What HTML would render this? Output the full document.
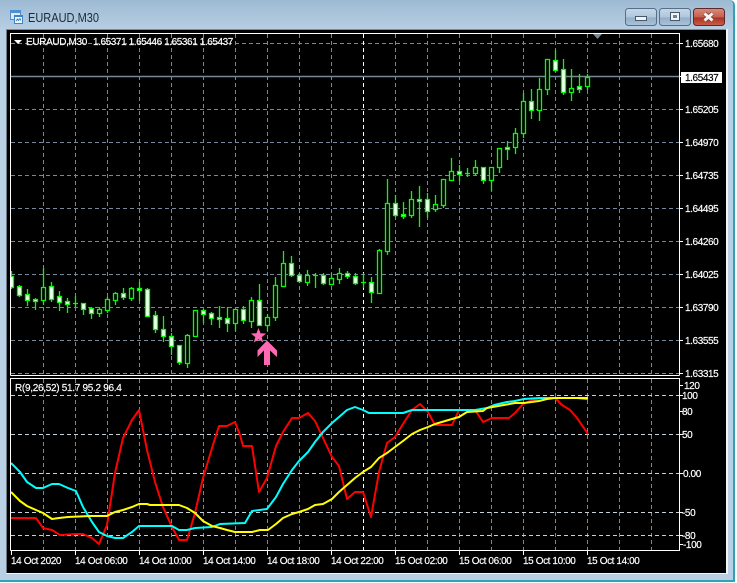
<!DOCTYPE html>
<html><head><meta charset="utf-8"><title>EURAUD,M30</title>
<style>
html,body{margin:0;padding:0;background:#fff;width:737px;height:583px;overflow:hidden}
svg{position:absolute;left:0;top:0;display:block}
text{font-family:"Liberation Sans",sans-serif;font-size:10px;fill:#fff;stroke:#fff;stroke-width:.18px;letter-spacing:-.4px}
</style></head><body>
<svg width="737" height="583" viewBox="0 0 737 583" xmlns="http://www.w3.org/2000/svg">
<defs>
<linearGradient id="tb" gradientUnits="userSpaceOnUse" x1="0" y1="0" x2="0" y2="30"><stop offset="0" stop-color="#9dbad2"/><stop offset="1" stop-color="#b8cfe4"/></linearGradient>
<linearGradient id="bn" x1="0" y1="0" x2="0" y2="1"><stop offset="0" stop-color="#c6d8e8"/><stop offset=".5" stop-color="#afc6db"/><stop offset=".55" stop-color="#94afc8"/><stop offset="1" stop-color="#aac3d9"/></linearGradient>
<linearGradient id="cl" x1="0" y1="0" x2="0" y2="1"><stop offset="0" stop-color="#d88c7c"/><stop offset=".5" stop-color="#c4604e"/><stop offset=".55" stop-color="#ab3222"/><stop offset="1" stop-color="#c95f4a"/></linearGradient>
<clipPath id="mc"><rect x="11" y="34" width="668" height="341"/></clipPath>
<clipPath id="ic"><rect x="11" y="379" width="668" height="171"/></clipPath>
</defs>
<path d="M0 0H729Q735 0 735 6V582H0Z" fill="#2fa3b4"/>
<path d="M0 0H728Q733 0 733 5V580H0Z" fill="#b8cfe4"/>
<path d="M0 0H728Q733 0 733 5V30H0Z" fill="url(#tb)"/>
<rect x="6" y="29" width="2" height="544" fill="#6f7a84"/>
<rect x="6" y="29" width="721" height="1" fill="#7e8b97"/>
<rect x="6" y="573" width="721" height="1" fill="#f2f6fa"/>
<rect x="726" y="29" width="2" height="545" fill="#f2f6fa"/>
<rect x="7" y="30" width="719" height="543" fill="#000"/>

<!-- icon -->
<g shape-rendering="crispEdges">
<rect x="10.5" y="10.5" width="10" height="9" fill="#dbe9f6" stroke="#4f8fd0"/>
<rect x="10" y="10" width="11" height="3" fill="#4f8fd0"/>
<rect x="14.5" y="15.5" width="8" height="8" fill="#eef5fb" stroke="#3f82c8"/>
<rect x="14" y="15" width="9" height="2" fill="#3f82c8"/>
</g>
<path d="M16 21l1.5-2 1 1.5 1.5-2 1 2" fill="none" stroke="#2f6fb5" stroke-width=".8"/>
<text x="28" y="22" textLength="71" lengthAdjust="spacingAndGlyphs" style="font-size:13px;fill:#1b2a3a;stroke:none;letter-spacing:0">EURAUD,M30</text>

<!-- window buttons -->
<rect x="625.5" y="8.5" width="31" height="17" rx="3" fill="url(#bn)" stroke="#566f88"/>
<rect x="635.5" y="16.5" width="11" height="4" fill="#eef3f8" stroke="#46586a" shape-rendering="crispEdges"/>
<rect x="659.5" y="8.5" width="31" height="17" rx="3" fill="url(#bn)" stroke="#566f88"/>
<rect x="670.500" y="12.500" width="9" height="8" fill="#eef3f8" stroke="#46586a" shape-rendering="crispEdges"/>
<rect x="673" y="15" width="4" height="3" fill="#6d8193"/>
<rect x="693.5" y="8.5" width="31" height="17" rx="3" fill="url(#cl)" stroke="#5c2a2a"/>
<path d="M704.500 13.500L712.500 20.500M712.500 13.500L704.500 20.500" fill="none" stroke="#6e3a34" stroke-width="4.400"/>
<path d="M704.500 13.500L712.500 20.500M712.500 13.500L704.500 20.500" fill="none" stroke="#f6f3f0" stroke-width="3"/>

<!-- grid main -->
<g shape-rendering="crispEdges" fill="none" stroke="#778899" stroke-dasharray="4 3">
<path d="M11 43.5H679M11 109.5H679M11 142.5H679M11 175.5H679M11 208.5H679M11 241.5H679M11 274.5H679M11 307.5H679M11 340.5H679M11 373.5H679"/>
<path d="M43.5 34V375M75.5 34V375M107.5 34V375M139.5 34V375M171.5 34V375M203.5 34V375M235.5 34V375M267.5 34V375M299.5 34V375M331.5 34V375M395.5 34V375M427.5 34V375M459.5 34V375M491.5 34V375M523.5 34V375M555.5 34V375M587.5 34V375M619.5 34V375M651.5 34V375"/>
<path stroke="#fff" d="M363.5 34V375"/>
<path d="M43.5 379V550M75.5 379V550M107.5 379V550M139.5 379V550M171.5 379V550M203.5 379V550M235.5 379V550M267.5 379V550M299.5 379V550M331.5 379V550M395.5 379V550M427.5 379V550M459.5 379V550M491.5 379V550M523.5 379V550M555.5 379V550M587.5 379V550M619.5 379V550M651.5 379V550"/>
<path stroke="#fff" d="M363.5 379V550"/>
<path stroke="#c8d0d8" d="M11 395.5H679M11 434.5H679M11 473.5H679M11 512.5H679M11 535.5H679"/>
</g>
<path d="M11 76.5H679" stroke="#778899" stroke-width="1.600" fill="none"/>
<path d="M593 34h9l-4.500 5z" fill="#778899"/>

<!-- candles -->
<g clip-path="url(#mc)" stroke="#00ff00" stroke-width="1.300">
<path fill="none" d="M11.5 271V289M19.5 285V297M27.5 289V306M35.5 298V310M43.5 268V305M51.5 282V302M59.5 291V311M67.5 298V313M75.5 296V307M83.5 303V315M91.5 307V319M99.5 307V317M107.5 297V313M115.5 292V305M123.5 288V300M131.5 287V301M139.5 282V301M147.5 288V317M155.5 311V333M163.5 316V342M171.5 333V355M179.5 345V365M187.5 334V368M195.5 310V337M203.5 309V323M211.5 312V325M219.5 306V328M227.5 307V332M235.5 309V331M243.5 306V324M251.5 297V328M259.5 284V326M267.5 314V331M275.5 277V321M283.5 251V287M291.5 256V277M299.5 273V283M307.5 270V286M315.5 273V288M323.5 273V285M331.5 273V284M339.5 268V284M347.5 271V279M355.5 273V285M363.5 273V288M371.5 277V303M379.5 249V294M387.5 179V255M395.5 195V217M403.5 202V219M411.5 191V218M419.5 186V227M427.5 193V218M435.5 195V212M443.5 179V208M451.5 158V180M459.5 165V181M467.5 168V177M475.5 160V175M483.5 167V184M491.5 167V191M499.5 148V173M507.5 141V160M515.5 128V154M523.5 93V138M531.5 89V119M539.5 78V121M547.5 59V95M555.5 50V72M563.5 59V95M571.5 69V101M579.5 74V93M587.5 74V90"/>
<path fill="none" d="M73 303.5h5M313 275.5h5M361 282.5h5M465 173.5h5"/>
<path fill="#000" d="M41.5 287.5h4v13h-4zM97.5 309.5h4v4h-4zM105.5 299.5h4v11h-4zM113.5 293.5h4v7h-4zM129.5 288.5h4v10h-4zM185.5 335.5h4v28h-4zM193.5 310.5h4v26h-4zM233.5 309.5h4v14h-4zM249.5 300.5h4v21h-4zM265.5 317.5h4v8h-4zM273.5 285.5h4v32h-4zM281.5 263.5h4v23h-4zM305.5 275.5h4v7h-4zM329.5 278.5h4v6h-4zM337.5 273.5h4v6h-4zM377.5 250.5h4v43h-4zM385.5 203.5h4v48h-4zM409.5 199.5h4v16h-4zM433.5 204.5h4v5h-4zM441.5 179.5h4v26h-4zM449.5 171.5h4v9h-4zM473.5 167.5h4v6h-4zM489.5 167.5h4v13h-4zM497.5 148.5h4v19h-4zM513.5 133.5h4v14h-4zM521.5 101.5h4v32h-4zM537.5 89.5h4v21h-4zM545.5 59.5h4v30h-4zM569.5 88.5h4v4h-4zM585.5 77.5h4v9h-4z"/>
<path fill="#fff" d="M9.5 276.5h4v11h-4zM17.5 286.5h4v9h-4zM25.5 294.5h4v6h-4zM33.5 299.5h4v2h-4zM49.5 286.5h4v13h-4zM57.5 296.5h4v6h-4zM65.5 301.5h4v3h-4zM81.5 303.5h4v6h-4zM89.5 308.5h4v5h-4zM121.5 293.5h4v4h-4zM137.5 288.5h4v2h-4zM145.5 289.5h4v27h-4zM153.5 315.5h4v14h-4zM161.5 329.5h4v7h-4zM169.5 336.5h4v10h-4zM177.5 345.5h4v17h-4zM201.5 310.5h4v4h-4zM209.5 313.5h4v5h-4zM217.5 317.5h4v2h-4zM225.5 318.5h4v5h-4zM241.5 309.5h4v11h-4zM257.5 300.5h4v25h-4zM289.5 263.5h4v12h-4zM297.5 275.5h4v6h-4zM321.5 275.5h4v8h-4zM345.5 273.5h4v3h-4zM353.5 276.5h4v7h-4zM369.5 282.5h4v10h-4zM393.5 203.5h4v12h-4zM401.5 214.5h4v2h-4zM417.5 199.5h4v2h-4zM425.5 199.5h4v12h-4zM457.5 171.5h4v3h-4zM481.5 167.5h4v13h-4zM505.5 147.5h4v2h-4zM529.5 101.5h4v9h-4zM553.5 60.5h4v10h-4zM561.5 69.5h4v23h-4zM577.5 86.5h4v3h-4z"/>
</g>

<!-- star and arrow -->
<polygon points="258.5,328 260.5,333.2 266.1,333.5 261.7,337.1 263.2,342.5 258.5,339.4 253.8,342.5 255.3,337.1 250.9,333.5 256.5,333.2" fill="#ff69b4"/>
<path d="M267 340.5L277 350.5V357L270 350.5V365H264V350.5L257.5 357V350.5Z" fill="#ff69b4"/>

<!-- indicator lines -->
<g clip-path="url(#ic)" fill="none" stroke-width="2" stroke-linejoin="round">
<polyline stroke="#ff0000" points="11,518 36,518 43,528 52,530 60,535 76,534 83,534 92,538 99,544 107,525 115,473 123,438 132,420 139,410 147,450 155,482 163,507 172,527 179,540 187,540 195,513 203,478 212,448 219,426 227,426 235,422 240,435 243,446 252,446 259,492 267,478 276,446 283,432 292,418 299,418 308,413 315,421 323,438 332,457 339,466 347,499 355,492 363,492 371,517 379,472 387,443 395,437 403,424 412,410 420,404 428,412 435,425 452,425 459,410 475,410 483,422 492,418 509,418 515,413 523,404 530,401 540,398 555,398 562,405 570,410 577,418 588,434"/>
<polyline stroke="#00ffff" points="11,463 20,472 27,482 36,488 43,488 52,484 59,484 68,488 76,491 83,507 92,522 99,532 107,536 115,538 123,538 132,532 139,526 172,526 179,530 187,530 195,528 212,527 220,524 245,523 252,511 267,509 276,497 283,484 292,470 299,461 308,452 315,442 323,432 332,423 339,417 347,410 355,407 363,410 369,413 403,413 412,410 475,410 487,408 494,405 507,402 515,401 524,399 540,398 555,398 577,398 588,399"/>
<polyline stroke="#ffff00" points="11,492 20,501 27,506 36,510 43,513 52,519 59,518 68,517 90,516 107,516 115,512 123,510 132,507 139,504 147,504 150,505 179,505 187,508 195,513 203,521 212,526 220,528 227,530 235,532 252,532 260,530 268,530 276,524 283,518 292,514 299,512 308,509 315,505 323,504 332,499 339,492 347,485 355,478 363,472 371,467 379,458 387,453 395,447 403,441 412,434 420,430 428,427 435,424 452,419 459,417 467,412 483,411 487,408 504,405 515,403 524,403 539,401 547,399 555,398 588,398"/>
</g>

<!-- frames -->
<g shape-rendering="crispEdges" fill="none" stroke="#fff">
<path d="M10.5 375.5V33.5H679.5V375.5M10.5 375.5H679.5"/>
<path d="M10.5 550.5V378.5H679.5V550.5H10.5"/>
<path d="M680 43.5h3M680 76.5h3M680 109.5h3M680 142.5h3M680 175.5h3M680 208.5h3M680 241.5h3M680 274.5h3M680 307.5h3M680 340.5h3M680 373.5h3M680 385.5h3M680 395.5h3M680 411.5h3M680 434.5h3M680 473.5h3M680 512.5h3M680 535.5h3M680 544.5h3"/>
<path d="M11.5 551v4M75.5 551v4M139.5 551v4M203.5 551v4M267.5 551v4M331.5 551v4M395.5 551v4M459.5 551v4M523.5 551v4M587.5 551v4"/>
</g>

<!-- header labels -->
<path d="M14 40h8l-4 4z" fill="#fff"/>
<text x="26" y="45" style="letter-spacing:-.35px">EURAUD,M30</text>
<text x="93" y="45" style="letter-spacing:-.42px">1.65371 1.65446 1.65361 1.65437</text>
<text x="15" y="391" style="letter-spacing:-.3px">R(9,26,52) 51.7 95.2 96.4</text>

<!-- price labels -->
<g>
<text x="685" y="47">1.65680</text>
<rect x="681" y="72" width="41" height="11" fill="#fff"/>
<text x="685" y="81" style="fill:#000;stroke:#000">1.65437</text>
<text x="685" y="113">1.65205</text>
<text x="685" y="146">1.64970</text>
<text x="685" y="179">1.64735</text>
<text x="685" y="212">1.64495</text>
<text x="685" y="245">1.64260</text>
<text x="685" y="278">1.64025</text>
<text x="685" y="311">1.63790</text>
<text x="685" y="344">1.63555</text>
<text x="685" y="377">1.63315</text>
<text x="684" y="389">120</text>
<text x="682" y="399">100</text>
<text x="682" y="415">80</text>
<text x="682" y="438">50</text>
<text x="683" y="477">0.00</text>
<text x="682" y="516">-50</text>
<text x="682" y="539">-80</text>
<text x="683" y="548">-100</text>
</g>

<!-- time labels -->
<g>
<text x="11" y="564">14 Oct 2020</text>
<text x="75" y="564">14 Oct 06:00</text>
<text x="139" y="564">14 Oct 10:00</text>
<text x="203" y="564">14 Oct 14:00</text>
<text x="267" y="564">14 Oct 18:00</text>
<text x="331" y="564">14 Oct 22:00</text>
<text x="395" y="564">15 Oct 02:00</text>
<text x="459" y="564">15 Oct 06:00</text>
<text x="523" y="564">15 Oct 10:00</text>
<text x="587" y="564">15 Oct 14:00</text>
</g>
</svg>
</body></html>
